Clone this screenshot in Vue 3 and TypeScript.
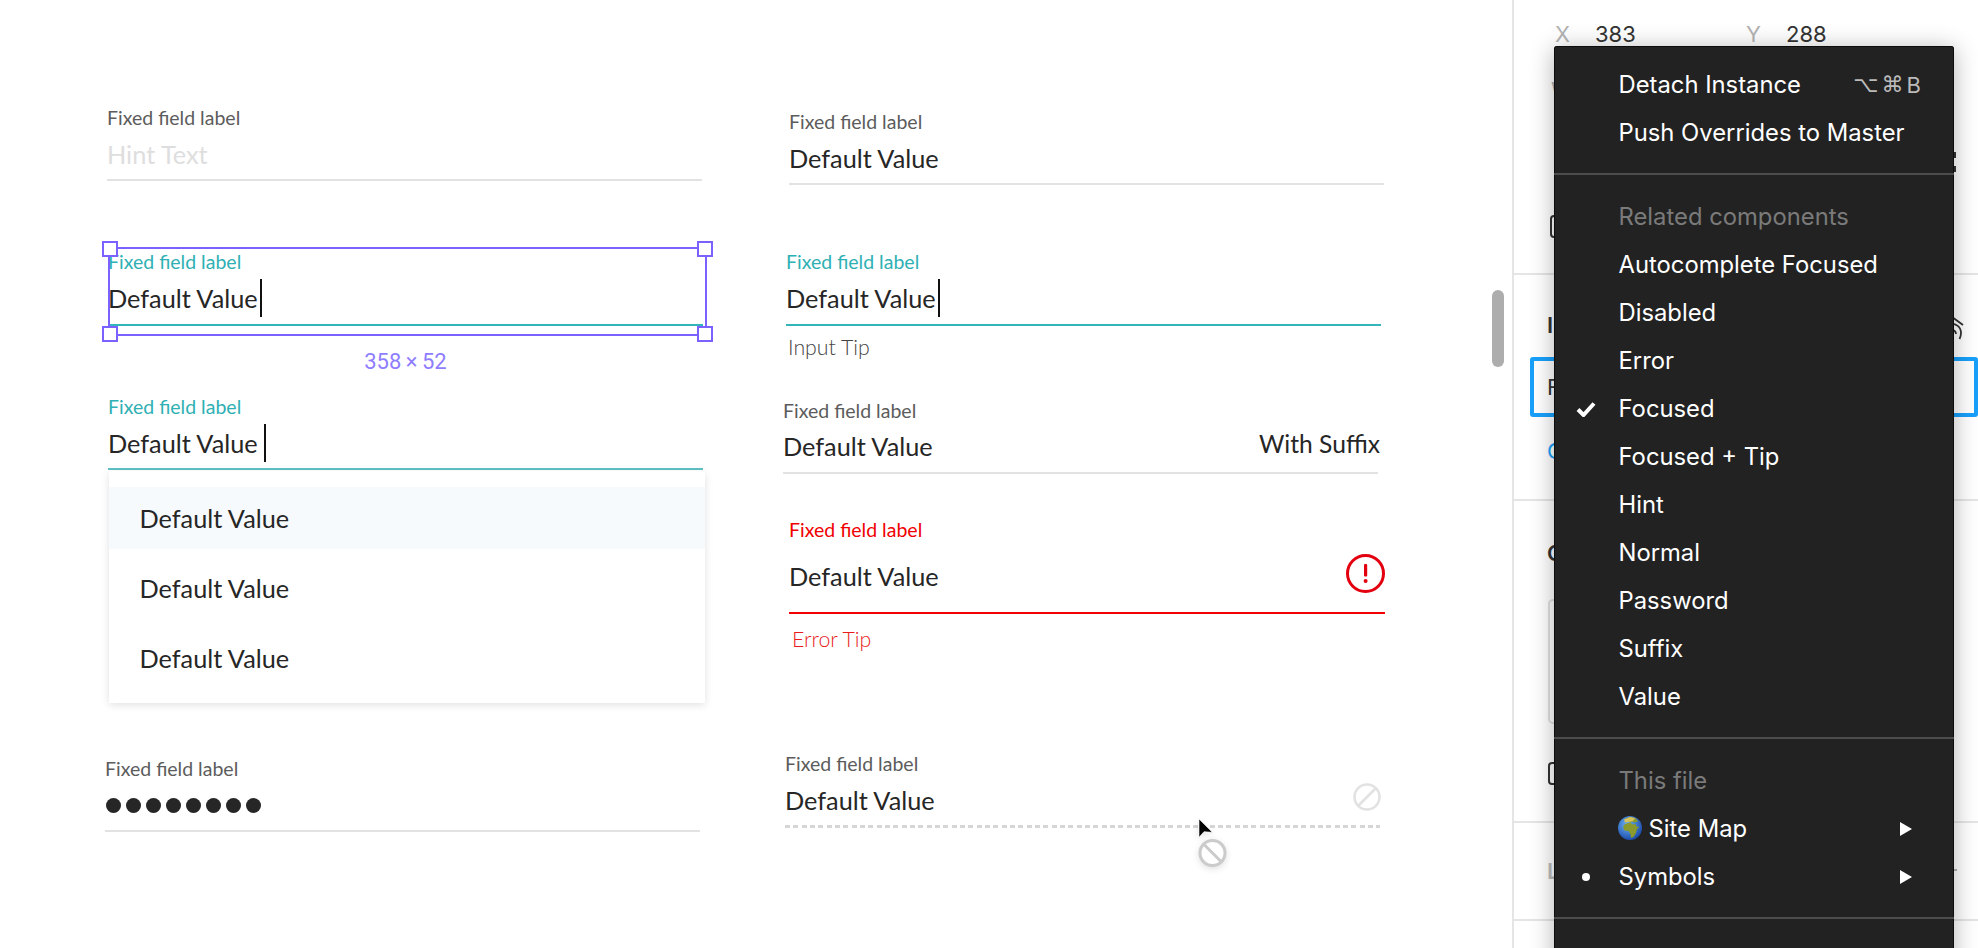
<script setup lang="ts">
interface MenuItem {
  label: string
  mark?: 'check' | 'dot'
  disabled?: boolean
}
const topItems: string[] = ['Detach Instance', 'Push Overrides to Master']
const related: MenuItem[] = [
  { label: 'Related components', disabled: true },
  { label: 'Autocomplete Focused' },
  { label: 'Disabled' },
  { label: 'Error' },
  { label: 'Focused', mark: 'check' },
  { label: 'Focused + Tip' },
  { label: 'Hint' },
  { label: 'Normal' },
  { label: 'Password' },
  { label: 'Suffix' },
  { label: 'Value' }
]
const options: string[] = ['Default Value', 'Default Value', 'Default Value']
const dots: number[] = [1, 2, 3, 4, 5, 6, 7, 8]
const label = 'Fixed field label'
const value = 'Default Value'
</script>

<template>
  <div class="app">
    <main class="canvas">
      <section class="field f-hint">
        <div class="label">{{ label }}</div>
        <div class="value hint">Hint Text</div>
        <div class="line"></div>
      </section>

      <section class="field f-value">
        <div class="label">{{ label }}</div>
        <div class="value">{{ value }}</div>
        <div class="line"></div>
      </section>

      <section class="field f-focus">
        <div class="label teal">{{ label }}</div>
        <div class="value">{{ value }}<i class="caret"></i></div>
        <div class="line line-teal"></div>
      </section>

      <section class="field f-tip">
        <div class="label teal">{{ label }}</div>
        <div class="value">{{ value }}<i class="caret"></i></div>
        <div class="line line-teal"></div>
        <div class="tip">Input Tip</div>
      </section>

      <section class="field f-auto">
        <div class="label teal">{{ label }}</div>
        <div class="value">{{ value }}<i class="caret caret-gap"></i></div>
        <div class="line line-teal soft"></div>
        <ul class="options">
          <li v-for="(o, i) in options" :key="i" class="option" :class="{ active: i === 0 }">{{ o }}</li>
        </ul>
      </section>

      <section class="field f-suffix">
        <div class="label">{{ label }}</div>
        <div class="value between">
          <span>{{ value }}</span>
          <span class="suffix">With Suffix</span>
        </div>
        <div class="line"></div>
      </section>

      <section class="field f-error">
        <div class="label red">{{ label }}</div>
        <div class="value between error-row">
          <span>{{ value }}</span>
          <svg class="err-icon" width="39" height="39" viewBox="0 0 39 39">
            <circle cx="19.5" cy="19.5" r="18" fill="none" stroke="#e3000f" stroke-width="3" />
            <rect x="18" y="10" width="3.2" height="12.5" rx="1" fill="#e3000f" />
            <circle cx="19.6" cy="27" r="2" fill="#e3000f" />
          </svg>
        </div>
        <div class="line line-red"></div>
        <div class="tip tip-red">Error Tip</div>
      </section>

      <section class="field f-password">
        <div class="label">{{ label }}</div>
        <div class="value pw">
          <i v-for="d in dots" :key="d" class="pw-dot"></i>
        </div>
        <div class="line"></div>
      </section>

      <section class="field f-disabled">
        <div class="label">{{ label }}</div>
        <div class="value between">
          <span>{{ value }}</span>
          <svg class="dis-icon" width="28" height="28" viewBox="0 0 28 28">
            <circle cx="14" cy="14" r="12.5" fill="none" stroke="#e2e2e2" stroke-width="2.6" />
            <path d="M22.5 5.5 5.5 22.5" stroke="#e2e2e2" stroke-width="2.6" />
          </svg>
        </div>
        <div class="line-dotted"></div>
      </section>

      <div class="selection">
        <i class="handle tl"></i>
        <i class="handle tr"></i>
        <i class="handle bl"></i>
        <i class="handle br"></i>
        <span class="size">358 × 52</span>
      </div>

      <div class="scrollbar"></div>

      <svg class="cursor" width="32" height="50" viewBox="0 0 32 50">
        <circle cx="14.5" cy="34" r="12.5" fill="#fff" stroke="#cbcbcb" stroke-width="3" />
        <path d="M5.5 25 23.5 43" stroke="#cbcbcb" stroke-width="3" />
        <path d="M1 0v18.3l5-5.6 8.3.6z" fill="#000" stroke="#fff" stroke-width=".6" />
      </svg>
    </main>

    <aside class="panel">
      <div class="sec sec-pos">
        <div class="xy">
          <span class="axis ax-x">X</span><span class="num">383</span>
          <span class="axis ax-y">Y</span><span class="num">288</span>
        </div>
        <div class="xy wh">
          <span class="axis ax-x">W</span>
        </div>
        <div class="marks"><i></i><i></i></div>
        <i class="corner"></i>
      </div>

      <div class="sec sec-inst">
        <div class="head-row">
          <span class="head">Instance</span>
          <svg class="detach" width="22" height="30" viewBox="0 0 22 30">
            <path d="M4 2 19 13M6 12c6-1 11 3 11 9 0 2-.5 4-1.500 6M6 18c3-1 6 1 6 4" fill="none" stroke="#333" stroke-width="1.800" />
          </svg>
        </div>
        <div class="select">
          <span>Focused</span>
          <svg width="10" height="8" viewBox="0 0 10 8"><path d="M1 7 6 1" fill="none" stroke="#b5b5b5" stroke-width="1.500" /></svg>
        </div>
        <div class="go">Go to Master Component</div>
      </div>

      <div class="sec sec-con">
        <div class="head">Constraints</div>
        <div class="con-box"></div>
        <i class="corner con-corner"></i>
      </div>

      <div class="sec sec-layer">
        <span class="head muted">Layer</span>
        <i class="dash"></i>
      </div>
    </aside>

    <nav class="menu">
      <div class="group first">
        <div class="row">
          <span>{{ topItems[0] }}</span>
          <span class="keys"><b>⌥</b><b>⌘</b><b class="key-b">B</b></span>
        </div>
        <div class="row"><span>{{ topItems[1] }}</span></div>
      </div>
      <div class="group">
        <div v-for="item in related" :key="item.label" class="row" :class="{ off: item.disabled }">
          <svg v-if="item.mark === 'check'" class="check" width="20" height="16" viewBox="0 0 20 16">
            <path d="M2 8.500 7.500 14 18 2.500" fill="none" stroke="#fff" stroke-width="4" />
          </svg>
          <span>{{ item.label }}</span>
        </div>
      </div>
      <div class="group">
        <div class="row off"><span>This file</span></div>
        <div class="row">
          <svg class="globe" width="24" height="24" viewBox="0 0 24 24">
            <defs>
              <radialGradient id="sea" cx="40%" cy="35%" r="70%">
                <stop offset="0" stop-color="#6db4f2" />
                <stop offset="1" stop-color="#1746a8" />
              </radialGradient>
            </defs>
            <circle cx="12" cy="12" r="12" fill="url(#sea)" />
            <path d="M6 3.500 12 1l6 1.500 2 3-4 1-2-1-2 1-5 1.500-2 3 1.500 3.500 4 .5 2 3 .5 4 2.500-1 2.500-4 1-4 2.500-2-3-.5-1-2.500-3 .5-2-2z" fill="#8a9a2c" />
            <path d="M6 3.500 12 1l5 1-2 3-5 1-3 .5z" fill="#d7c25a" />
          </svg>
          <span>Site Map</span>
          <i class="arrow"></i>
        </div>
        <div class="row">
          <i class="bullet"></i>
          <span>Symbols</span>
          <i class="arrow"></i>
        </div>
      </div>
      <div class="group last"></div>
    </nav>
  </div>
</template>

<style scoped>
.app {
  position: relative;
  display: flex;
  width: 1978px;
  height: 948px;
  overflow: hidden;
  background: #fff;
  font-family: Lato, "Liberation Sans", sans-serif;
  color: #262626;
}

/* canvas */
.canvas {
  position: relative;
  flex: 0 0 1512px;
  height: 948px;
}
.field {
  position: absolute;
  width: 595px;
  display: flex;
  flex-direction: column;
}
.f-hint { left: 107px; top: 108px; }
.f-value { left: 789px; top: 111.5px; }
.f-focus { left: 108px; top: 252px; }
.f-tip { left: 786px; top: 252px; }
.f-auto { left: 108px; top: 396.5px; }
.f-suffix { left: 783px; top: 401px; }
.f-error { left: 789px; top: 520px; width: 596px; }
.f-password { left: 105px; top: 759px; }
.f-disabled { left: 785px; top: 754px; }
.f-focus .line, .f-tip .line { margin-top: 8px; }
.f-suffix .value { margin-top: 6.5px; }
.f-suffix .line { margin-top: 8px; }

.label {
  height: 20px;
  line-height: 20px;
  font-size: 19.5px;
  color: #5c5c5c;
  white-space: nowrap;
}
.teal { color: #2eb0b4; }
.red { color: #f00000; }
.value {
  display: flex;
  align-items: center;
  height: 36px;
  margin-top: 8px;
  font-size: 25.3px;
  white-space: nowrap;
}
.hint { color: #dedede; }
.between { justify-content: space-between; }
.caret {
  flex: none;
  width: 2px;
  height: 38px;
  margin-left: 2px;
  background: #111;
}
.caret-gap { margin-left: 6px; }
.line {
  height: 2px;
  margin-top: 7px;
  background: #e2e2e2;
}
.line-teal { background: #33b5b9; }
.soft { background: #5fc2c5; }
.line-red { background: #f00000; margin-top: 18px; }
.line-dotted {
  height: 3px;
  margin-top: 7px;
  background: repeating-linear-gradient(90deg, #d6d6d6 0 5px, transparent 5px 8.33px);
}
.error-row { margin-top: 18px; }
.err-icon { margin: -5px 0 0; }
.suffix { margin: -5px -2px 0 0; font-size: 24.6px; }
.dis-icon { margin: -6px -1px 0 0; }
.tip {
  height: 24px;
  line-height: 24px;
  margin: 9px 0 0 2px;
  font-size: 21.3px;
  font-weight: 300;
  color: #444;
}
.tip-red {
  margin: 13px 0 0 3px;
  color: #e81c1c;
}
.pw {
  gap: 5px;
  padding-left: 1px;
}
.pw-dot {
  width: 15px;
  height: 15px;
  border-radius: 50%;
  background: #262626;
}
.options {
  width: 596px;
  margin: 1px 0 0 1px;
  padding: 16.500px 0 13.500px;
  list-style: none;
  display: flex;
  flex-direction: column;
  gap: 8px;
  background: #fff;
  box-shadow: 0 2px 8px rgba(0, 0, 0, 0.12);
}
.option {
  height: 62px;
  line-height: 63px;
  padding-left: 30.500px;
  font-size: 25.3px;
}
.active { background: #f7fafd; }

.selection {
  position: absolute;
  left: 108px;
  top: 247px;
  width: 599px;
  height: 89px;
  box-sizing: border-box;
  border: 2px solid #7b61ff;
}
.handle {
  position: absolute;
  width: 16px;
  height: 16px;
  box-sizing: border-box;
  background: #fff;
  border: 2px solid #7b61ff;
}
.tl { left: -8px; top: -8px; }
.tr { right: -8px; top: -8px; }
.bl { left: -8px; bottom: -8px; }
.br { right: -8px; bottom: -8px; }
.size {
  position: absolute;
  top: 100%;
  left: 0;
  right: 4px;
  margin-top: 16px;
  text-align: center;
  font-family: Roboto, sans-serif;
  font-size: 22px;
  word-spacing: -1px;
  line-height: 24px;
  color: #8f7dff;
}
.scrollbar {
  position: absolute;
  left: 1492px;
  top: 290px;
  width: 12px;
  height: 77px;
  border-radius: 6px;
  background: #adadad;
}
.cursor {
  position: absolute;
  left: 1198px;
  top: 819px;
  filter: drop-shadow(0 2px 3px rgba(0, 0, 0, 0.12));
}

/* inspector */
.panel {
  flex: 1;
  box-sizing: border-box;
  border-left: 2px solid #e5e5e5;
  font-family: Inter, "Liberation Sans", sans-serif;
  font-size: 22px;
  color: #333;
}
.sec {
  box-sizing: border-box;
  border-bottom: 2px solid #e5e5e5;
}
.sec-pos { height: 275px; padding: 22px 22px 0 34px; }
.sec-inst { height: 226px; padding: 38px 0 0 16px; }
.sec-con { height: 322px; padding: 40px 0 0 33px; }
.sec-layer {
  height: 98px;
  padding: 36px 21px 0 33px;
  display: flex;
  justify-content: space-between;
}
.xy {
  display: flex;
  height: 24px;
  line-height: 24px;
  padding-left: 7px;
}
.wh { margin-top: 32px; padding-left: 3px; }
.axis { color: #b3b3b3; }
.ax-x { width: 40px; }
.ax-y { width: 40px; margin-left: 111px; }
.num { width: 40px; }
.marks {
  display: flex;
  flex-direction: column;
  align-items: flex-end;
  gap: 8px;
  margin-top: 50px;
}
.marks i {
  width: 2px;
  height: 6px;
  background: #333;
}
.corner {
  display: block;
  box-sizing: border-box;
  width: 22px;
  height: 23px;
  margin: 43px 0 0 2px;
  border: 2px solid #333;
  border-radius: 4px;
}
.head {
  font-size: 22px;
  font-weight: 600;
  line-height: 24px;
}
.head-row {
  display: flex;
  justify-content: space-between;
  padding: 0 12px 0 17px;
  height: 24px;
}
.detach { margin-top: -1px; }
.select {
  display: flex;
  align-items: center;
  justify-content: space-between;
  box-sizing: border-box;
  width: 448px;
  height: 60px;
  margin-top: 20px;
  padding: 0 19px 0 13px;
  border: 4px solid #18a0fb;
  border-radius: 3px;
  font-size: 22px;
}
.go {
  margin: 22px 0 0 17px;
  line-height: 24px;
  font-size: 22px;
  color: #18a0fb;
}
.con-box {
  box-sizing: border-box;
  width: 220px;
  height: 125px;
  margin: 34px 0 0 1px;
  border: 2px solid #e0e0e0;
  border-radius: 5px;
}
.con-corner { margin: 38px 0 0 1px; }
.muted { color: #bdbdbd; }
.dash {
  width: 6px;
  height: 2px;
  margin-top: 10px;
  background: #b5b5b5;
}

/* context menu */
.menu {
  position: absolute;
  left: 1554px;
  top: 46px;
  width: 400px;
  height: 940px;
  background: #222;
  border-radius: 3px;
  box-shadow: inset 0 0 0 1px rgba(0, 0, 0, 0.6), 0 3px 24px rgba(0, 0, 0, 0.3);
  color: #fff;
  font-family: Inter, "Liberation Sans", sans-serif;
  font-size: 23.8px;
}
.group {
  padding: 17.500px 0 16.500px;
  border-bottom: 2px solid #4d4d4d;
}
.first { padding: 14.500px 0 16.500px; }
.last { border-bottom: 0; }
.row {
  position: relative;
  display: flex;
  align-items: center;
  height: 48px;
  padding-left: 64.500px;
  white-space: nowrap;
}
.off { color: #7a7a7a; }
.keys {
  display: flex;
  margin-left: auto;
  padding-right: 33px;
  color: #bbb;
  font-family: "DejaVu Sans", sans-serif;
  font-size: 22px;
}
.keys b { font-weight: 400; margin-left: 3px; }
.key-b { font-family: Inter, sans-serif; }
.check { position: absolute; left: 22px; top: 16px; }
.globe { flex: none; margin: -2px 7px 0 -1px; }
.bullet {
  position: absolute;
  left: 28px;
  top: 20px;
  width: 8px;
  height: 8px;
  border-radius: 50%;
  background: #fff;
}
.arrow {
  position: absolute;
  left: 346px;
  top: 17px;
  border-left: 12px solid #fff;
  border-top: 7px solid transparent;
  border-bottom: 7px solid transparent;
}
</style>

<style>
html, body {
  margin: 0;
  overflow: hidden;
  background: #fff;
}
</style>
